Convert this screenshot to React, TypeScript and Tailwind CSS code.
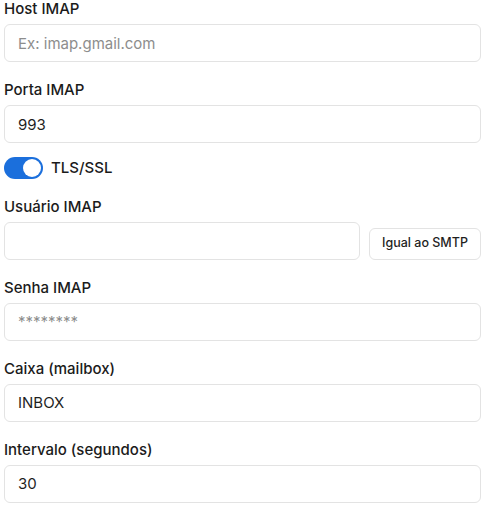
import React, { useState } from "react";

const font = { fontFamily: "Inter, 'Noto Sans', sans-serif" };

function Field({
  label,
  placeholder,
  value,
  type = "text",
}: {
  label: string;
  placeholder?: string;
  value?: string;
  type?: string;
}) {
  return (
    <div className="flex flex-col">
      <label className="h-5 text-[15px] leading-5 font-medium text-[#1b1b1b]">{label}</label>
      <input
        type={type}
        defaultValue={value}
        placeholder={placeholder}
        className="mt-[5px] h-[38px] w-full rounded-md border border-[#e3e3e3] bg-white px-[13px] text-[15px] text-[#1f1f1f] outline-none placeholder:text-[#8d8d8d]"
      />
    </div>
  );
}

export default function App() {
  const [tls, setTls] = useState(true);

  return (
    <div className="min-h-screen bg-white pl-1 pr-[19px]" style={font}>
      <div className="-mt-[1px] flex flex-col">
        <Field label="Host IMAP" placeholder="Ex: imap.gmail.com" />
        <div className="mt-[18px]">
          <Field label="Porta IMAP" value="993" />
        </div>

        {/* TLS toggle */}
        <div className="mt-[14px] flex items-center gap-2">
          <button
            type="button"
            onClick={() => setTls(!tls)}
            className={`flex h-[22px] w-[39px] items-center rounded-full px-[2px] ${
              tls ? "justify-end bg-[#1b6fdc]" : "justify-start bg-[#d4d4d4]"
            }`}
          >
            <span className="h-[18px] w-[18px] rounded-full bg-white" />
          </button>
          <span className="text-[15px] font-medium text-[#1b1b1b]">TLS/SSL</span>
        </div>

        <div className="mt-[17px] flex flex-col">
          <label className="h-5 text-[15px] leading-5 font-medium text-[#1b1b1b]">Usuário IMAP</label>
          <div className="mt-[5px] flex items-end gap-2">
            <input
              type="text"
              className="h-[38px] w-[356px] rounded-md border border-[#e3e3e3] bg-white px-[13px] text-[15px] outline-none"
            />
            <button
              type="button"
              className="ml-auto h-8 w-[112px] rounded-md border border-[#e3e3e3] bg-white text-[12.5px] font-medium text-[#1f1f1f]"
            >
              Igual ao SMTP
            </button>
          </div>
        </div>

        <div className="mt-[18px]">
          <Field label="Senha IMAP" placeholder="********" type="password" />
        </div>
        <div className="mt-[18px]">
          <Field label="Caixa (mailbox)" value="INBOX" />
        </div>
        <div className="mt-[18px]">
          <Field label="Intervalo (segundos)" value="30" />
        </div>
      </div>
    </div>
  );
}
